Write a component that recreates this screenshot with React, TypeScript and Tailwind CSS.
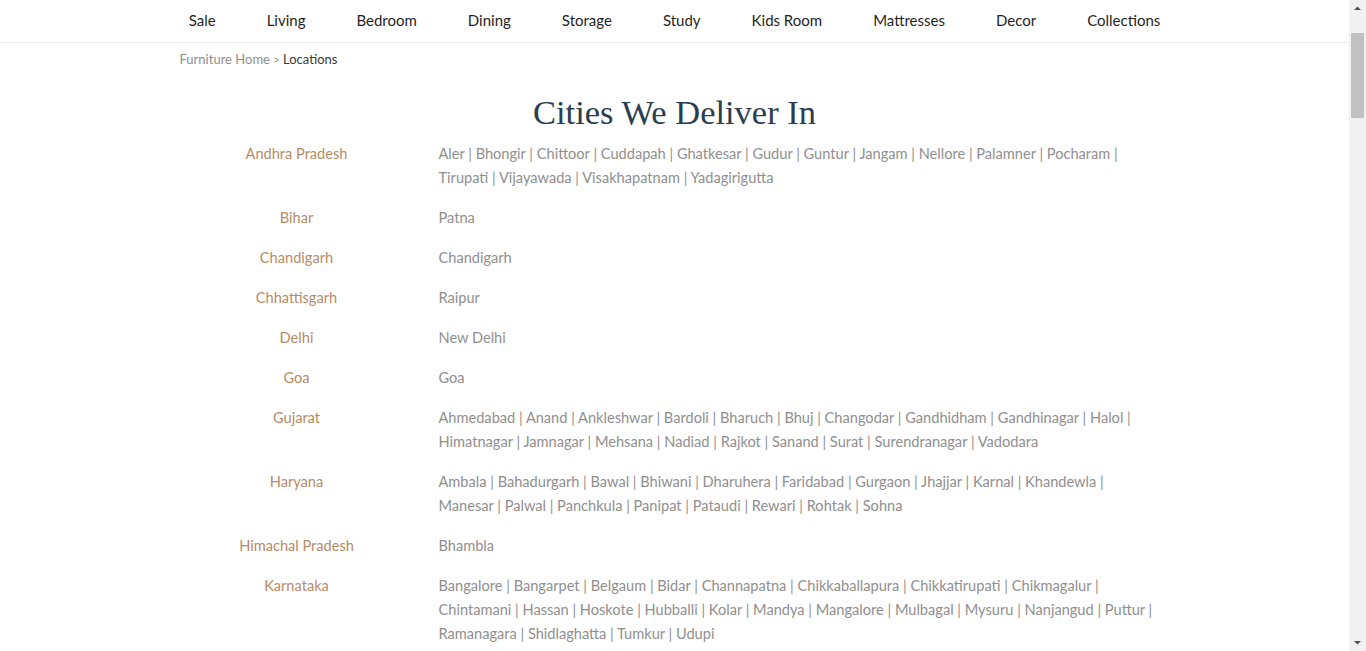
const navItems = [
  "Sale",
  "Living",
  "Bedroom",
  "Dining",
  "Storage",
  "Study",
  "Kids Room",
  "Mattresses",
  "Decor",
  "Collections",
];

// each state -> lines of cities, split where the page wraps them
const states: { name: string; lines: string[][] }[] = [
  {
    name: "Andhra Pradesh",
    lines: [
      ["Aler", "Bhongir", "Chittoor", "Cuddapah", "Ghatkesar", "Gudur", "Guntur", "Jangam", "Nellore", "Palamner", "Pocharam"],
      ["Tirupati", "Vijayawada", "Visakhapatnam", "Yadagirigutta"],
    ],
  },
  { name: "Bihar", lines: [["Patna"]] },
  { name: "Chandigarh", lines: [["Chandigarh"]] },
  { name: "Chhattisgarh", lines: [["Raipur"]] },
  { name: "Delhi", lines: [["New Delhi"]] },
  { name: "Goa", lines: [["Goa"]] },
  {
    name: "Gujarat",
    lines: [
      ["Ahmedabad", "Anand", "Ankleshwar", "Bardoli", "Bharuch", "Bhuj", "Changodar", "Gandhidham", "Gandhinagar", "Halol"],
      ["Himatnagar", "Jamnagar", "Mehsana", "Nadiad", "Rajkot", "Sanand", "Surat", "Surendranagar", "Vadodara"],
    ],
  },
  {
    name: "Haryana",
    lines: [
      ["Ambala", "Bahadurgarh", "Bawal", "Bhiwani", "Dharuhera", "Faridabad", "Gurgaon", "Jhajjar", "Karnal", "Khandewla"],
      ["Manesar", "Palwal", "Panchkula", "Panipat", "Pataudi", "Rewari", "Rohtak", "Sohna"],
    ],
  },
  { name: "Himachal Pradesh", lines: [["Bhambla"]] },
  {
    name: "Karnataka",
    lines: [
      ["Bangalore", "Bangarpet", "Belgaum", "Bidar", "Channapatna", "Chikkaballapura", "Chikkatirupati", "Chikmagalur"],
      ["Chintamani", "Hassan", "Hoskote", "Hubballi", "Kolar", "Mandya", "Mangalore", "Mulbagal", "Mysuru", "Nanjangud", "Puttur"],
      ["Ramanagara", "Shidlaghatta", "Tumkur", "Udupi"],
    ],
  },
];

const CityLine = ({ cities, last }: { cities: string[]; last: boolean }) => (
  <div className="whitespace-nowrap">
    {cities.map((c, i) => (
      <span key={c}>
        {c}
        {(i < cities.length - 1 || !last) && <span> | </span>}
      </span>
    ))}
  </div>
);

const Scrollbar = () => (
  <div className="w-[17px] shrink-0 bg-[#f1f1f1] flex flex-col items-center">
    <svg width="17" height="17" viewBox="0 0 17 17" className="shrink-0">
      <path d="M5 10 L8.5 6.5 L12 10 Z" fill="#505050" />
    </svg>
    <div className="mt-[16px] w-[13px] h-[85px] bg-[#c1c1c1] shrink-0" />
    <div className="flex-1" />
    <svg width="17" height="17" viewBox="0 0 17 17" className="shrink-0">
      <path d="M5 7 L8.5 10.5 L12 7 Z" fill="#505050" />
    </svg>
  </div>
);

export default function App() {
  return (
    <div className="h-[651px] flex overflow-hidden bg-white font-['Lato','Open_Sans',sans-serif]">
      <div className="flex-1 min-w-0">
        <nav className="border-b border-[#ebebeb]">
          <ul className="flex justify-center items-center h-[42px] pb-[2px] gap-[51px] text-[15px] text-[#1f1f1f]">
            {navItems.map((item) => (
              <li key={item} className="cursor-pointer">
                {item}
              </li>
            ))}
          </ul>
        </nav>

        <div className="w-[990px] mx-auto">
          <div className="mt-[8px] text-[13px] leading-[16px] text-[#8f8f8f]">
            Furniture Home <span className="text-[11px]">&gt;</span>{" "}
            <span className="text-[#3a3a3a]">Locations</span>
          </div>

          <h1 className="mt-[23px] text-center font-['Liberation_Serif',serif] text-[34.5px] leading-[42px] text-[#2b3d51]">
            Cities We Deliver In
          </h1>

          <div className="mt-[1px]">
            {states.map((s) => (
              <div key={s.name} className="flex py-[8px] text-[14.6px] leading-[24px]">
                <div className="w-[234px] shrink-0 text-center text-[#b88b66]">{s.name}</div>
                <div className="pl-[25px] text-[#8f8f8f]">
                  {s.lines.map((line, i) => (
                    <CityLine key={i} cities={line} last={i === s.lines.length - 1} />
                  ))}
                </div>
              </div>
            ))}
          </div>
        </div>
      </div>
      <Scrollbar />
    </div>
  );
}
